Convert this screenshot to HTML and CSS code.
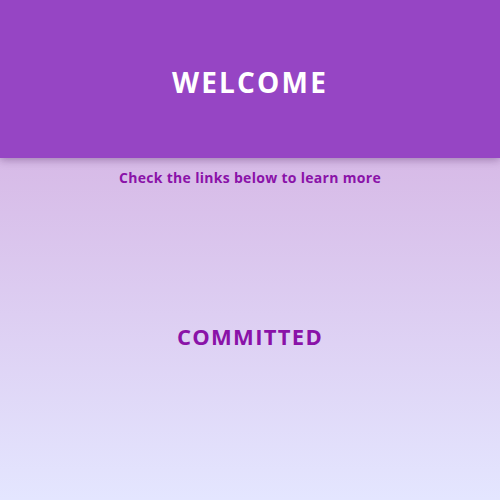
FILE: index.html
```html
<!DOCTYPE html>
<html>
<head>
<meta charset="utf-8">
<link rel="stylesheet" href="styles.css">
</head>
<body>
<header class="hero">
  <h1 class="hero-title">WELCOME</h1>
</header>
<main class="content">
  <p class="subtitle">Check the links below to learn more</p>
  <h2 class="word">COMMITTED</h2>
</main>
</body>
</html>
```

FILE: styles.css
```css
html, body {
  margin: 0;
  padding: 0;
}
body {
  font-family: "Open Sans", "DejaVu Sans", sans-serif;
  min-height: 500px;
  display: flex;
  flex-direction: column;
  background: #e4e6ff;
}
.hero {
  height: 158px;
  flex: none;
  background: #9645c4;
  box-shadow: 0 2px 8px rgba(60, 20, 80, 0.35);
  display: flex;
  justify-content: center;
  position: relative;
  z-index: 1;
}
.hero-title {
  margin: 0;
  padding-top: 63px;
  color: #ffffff;
  font-size: 28px;
  font-weight: 700;
  line-height: 38px;
  height: 38px;
  letter-spacing: 2.2px;
}
.content {
  flex: 1;
  display: flex;
  flex-direction: column;
  align-items: center;
  background: linear-gradient(to bottom, #d7bae7 0%, #e4e6ff 100%);
}
.subtitle {
  margin: 10px 0 0;
  color: #8a12a8;
  font-size: 14px;
  font-weight: 700;
  line-height: 20px;
  letter-spacing: 0.3px;
}
.word {
  margin: 133px 0 0;
  color: #8a12a8;
  font-size: 22px;
  font-weight: 700;
  line-height: 30px;
  letter-spacing: 1.3px;
}
```
